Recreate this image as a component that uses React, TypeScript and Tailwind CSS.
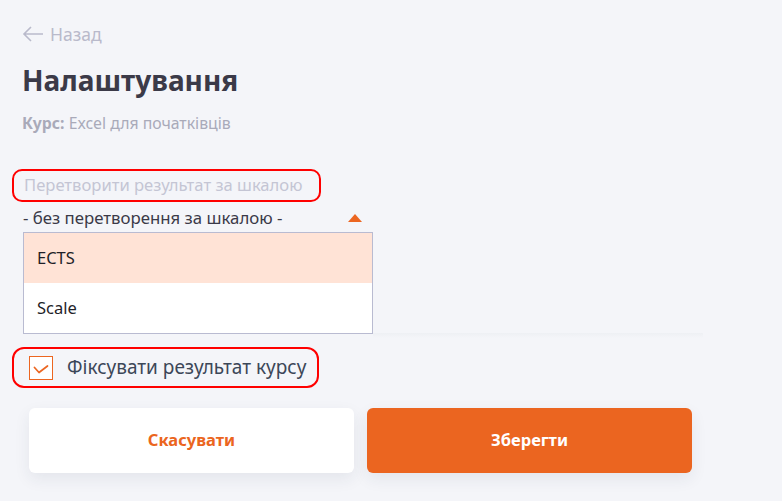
import React from "react";

export default function App() {
  return (
    <div
      className="w-[782px] h-[501px] bg-[#f4f5f9] overflow-hidden relative"
      style={{ fontFamily: '"Noto Sans", "Open Sans", sans-serif' }}
    >
      <div className="pl-[22px] pt-[22px]">
        <div className="flex items-center gap-[6px] text-[17.5px] leading-[24px] text-[#b9bacb]">
          <svg width="22" height="16" viewBox="0 0 22 16" fill="none" stroke="#b9bacb" strokeWidth="1.6">
            <path d="M21 8H2M9 1L2 8l7 7" />
          </svg>
          <span>Назад</span>
        </div>
        <div className="mt-[16px] text-[28px] leading-[36px] font-bold text-[#3b3a48]">Налаштування</div>
        <div className="mt-[15px] text-[15.8px] leading-[20px] text-[#a9aab9]">
          <span className="font-bold">Курс:</span> Excel для початківців
        </div>
      </div>

      <div className="mt-[36px] ml-[12px] w-[309px] h-[33px] border-2 border-[#ff0000] rounded-[10px] flex items-center pl-[10px] text-[16.6px] text-[#c4c5d4]">
        Перетворити результат за шкалою
      </div>

      <div className="ml-[23px] w-[350px] mt-[2px] flex items-center justify-between h-[28px] text-[16.8px] text-[#3b3a48]">
        <span>- без перетворення за шкалою -</span>
        <svg width="14" height="8" viewBox="0 0 14 8" className="mr-[11px]">
          <path d="M7 0L14 8H0Z" fill="#ec6621" />
        </svg>
      </div>

      <div className="relative">
        <div className="ml-[23px] w-[350px] border border-[#b9bbd1] bg-white text-[16.5px] text-[#1f1f28]">
          <div className="h-[50px] bg-[#ffe3d6] flex items-center pl-[13px]">ECTS</div>
          <div className="h-[50px] flex items-center pl-[13px]">Scale</div>
        </div>
        <div className="absolute left-[373px] top-[101px] w-[330px] h-[5px] bg-gradient-to-b from-[#eef0f4] to-[#f4f5f9]" />
      </div>

      <div className="mt-[13px] ml-[12px] w-[307px] h-[41px] border-2 border-[#ff0000] rounded-[12px] flex items-center pl-[15px]">
        <div className="w-[24px] h-[24px] border border-[#ec6621] bg-white flex items-center justify-center">
          <svg width="16" height="9" viewBox="0 0 16 9" fill="none" stroke="#ec6621" strokeWidth="1.7" strokeLinecap="round" strokeLinejoin="round" className="mt-[4px]">
            <path d="M1.5 2.5L6 7.5L14.5 1" />
          </svg>
        </div>
        <span className="ml-[14px] text-[19px] text-[#3c4758]">Фіксувати результат курсу</span>
      </div>

      <div className="mt-[20px] ml-[29px] flex gap-[13px]">
        <button className="w-[325px] h-[65px] bg-white rounded-[6px] shadow-[0_6px_16px_rgba(40,45,80,0.08)] text-[16.5px] font-bold text-[#eb6520]">
          Скасувати
        </button>
        <button className="w-[325px] h-[65px] bg-[#eb6520] rounded-[6px] shadow-[0_6px_16px_rgba(40,45,80,0.08)] text-[16.5px] font-bold text-white">
          Зберегти
        </button>
      </div>
    </div>
  );
}
